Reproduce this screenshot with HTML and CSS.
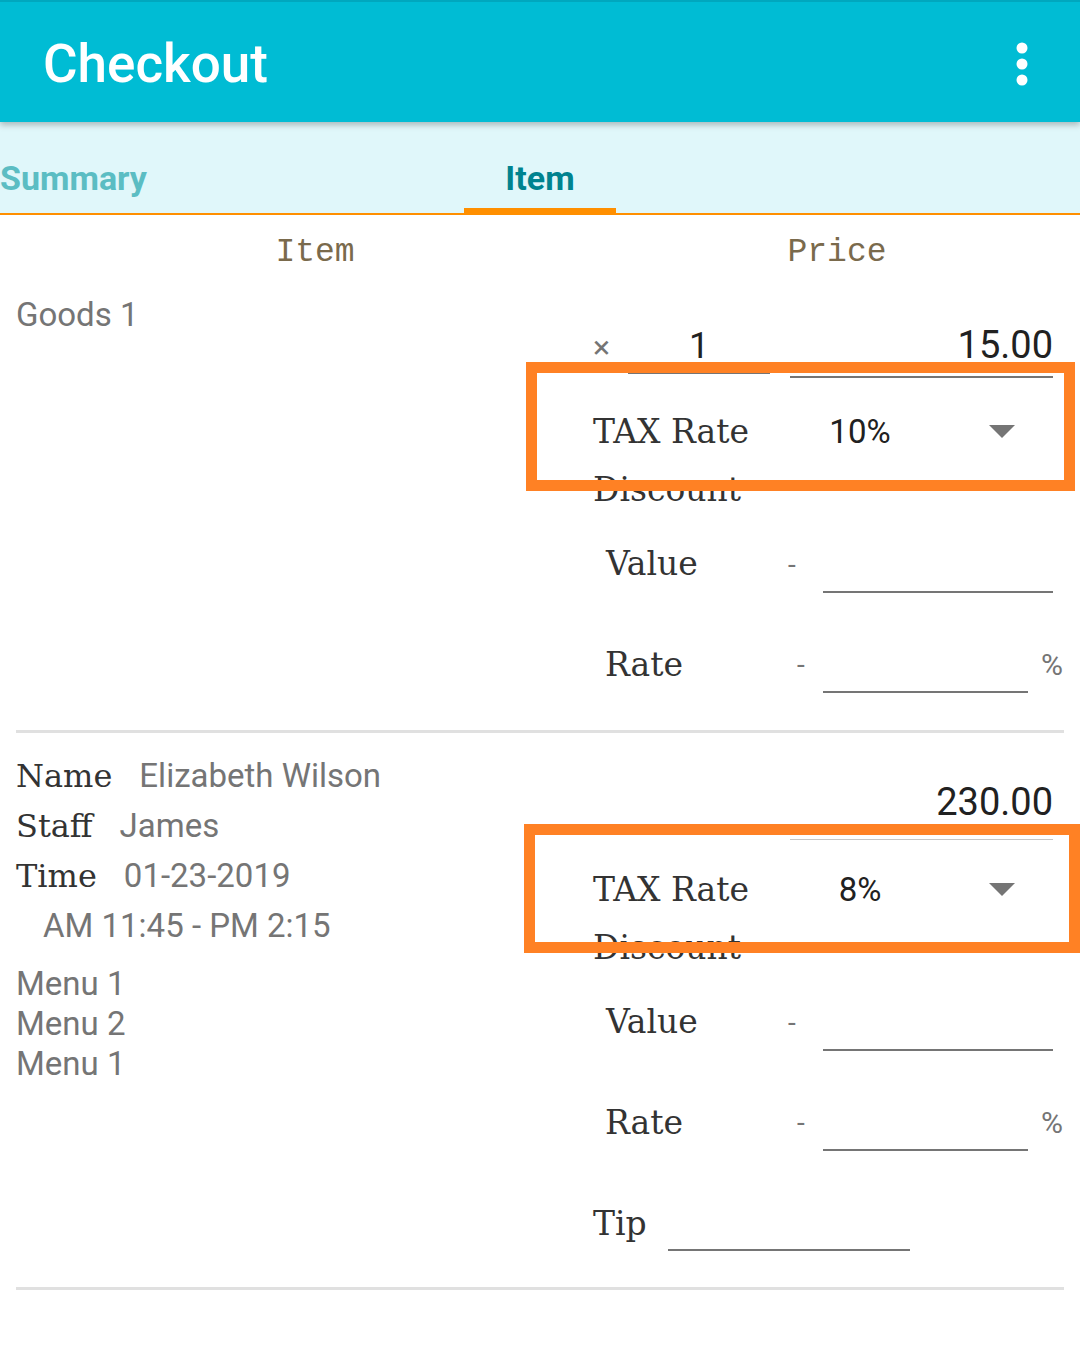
FILE: index.html
```html
<!DOCTYPE html>
<html lang="en">
<head>
    <meta charset="UTF-8">
    <meta name="viewport" content="width=device-width, initial-scale=1.0">
    <title>Checkout</title>
    <link rel="stylesheet" href="styles.css">
</head>
<body>

<header class="appbar">
    <h1 class="appbar-title">Checkout</h1>
    <svg class="overflow" width="12" height="44" viewBox="0 0 12 44">
        <circle cx="6" cy="6" r="5.5"/>
        <circle cx="6" cy="22" r="5.5"/>
        <circle cx="6" cy="38" r="5.5"/>
    </svg>
</header>

<nav class="tabs">
    <a class="tab">Summary</a>
    <a class="tab active">Item</a>
</nav>

<div class="col-head">
    <span>Item</span>
    <span>Price</span>
</div>

<!-- first line: a single product -->
<section class="order">
    <div class="order-info">
        <p class="goods">Goods 1</p>
    </div>
    <div class="order-form">
        <div class="price-row">
            <span class="times">&times;</span>
            <span class="field qty">1</span>
            <span class="field price">15.00</span>
        </div>
        <div class="tax-row">
            <span class="label">TAX Rate</span>
            <span class="tax-value">10%</span>
            <span class="caret"></span>
        </div>
        <div class="label discount">Discount</div>
        <div class="adj-row value-row">
            <span class="label">Value</span>
            <span class="dash">-</span>
            <span class="field value-field"></span>
        </div>
        <div class="adj-row rate-row">
            <span class="label">Rate</span>
            <span class="dash">-</span>
            <span class="field rate-field"></span>
            <span class="unit">%</span>
        </div>
    </div>
    <div class="highlight"></div>
</section>

<hr class="divider">

<!-- second line: a booking -->
<section class="order booking">
    <div class="order-info">
        <p class="info"><span class="label">Name</span><span class="info-value">Elizabeth Wilson</span></p>
        <p class="info"><span class="label">Staff</span><span class="info-value">James</span></p>
        <p class="info"><span class="label">Time</span><span class="info-value">01-23-2019</span></p>
        <p class="info time-range">AM 11:45 - PM 2:15</p>
        <ul class="menus">
            <li>Menu 1</li>
            <li>Menu 2</li>
            <li>Menu 1</li>
        </ul>
    </div>
    <div class="order-form">
        <div class="price-row">
            <span class="field price light">230.00</span>
        </div>
        <div class="tax-row">
            <span class="label">TAX Rate</span>
            <span class="tax-value">8%</span>
            <span class="caret"></span>
        </div>
        <div class="label discount">Discount</div>
        <div class="adj-row value-row">
            <span class="label">Value</span>
            <span class="dash">-</span>
            <span class="field value-field"></span>
        </div>
        <div class="adj-row rate-row">
            <span class="label">Rate</span>
            <span class="dash">-</span>
            <span class="field rate-field"></span>
            <span class="unit">%</span>
        </div>
        <div class="adj-row tip-row">
            <span class="label">Tip</span>
            <span class="field tip-field"></span>
        </div>
    </div>
    <div class="highlight"></div>
</section>

<hr class="divider">

</body>
</html>
```

FILE: styles.css
```css
body {
    margin: 0;
    font-family: Roboto, "Noto Sans", sans-serif;
    background-color: #FFFFFF;
    color: #212121;
}

p, ul {
    margin: 0;
    padding: 0;
}

/* App bar */
.appbar {
    display: flex;
    align-items: center;
    justify-content: space-between;
    height: 122px;
    box-sizing: border-box;
    padding: 4px 52px 0 43px;
    background-color: #00BCD4; /* cyan 500 */
    border-top: 2px solid #00A7BE;
    box-shadow: 0 3px 6px rgba(0, 0, 0, 0.25);
    position: relative;
    z-index: 1;
}

.appbar-title {
    margin: 0;
    font-size: 53px;
    font-weight: 500;
    line-height: 1;
    color: #FFFFFF;
}

.overflow {
    fill: #FFFFFF;
}

/* Tabs */
.tabs {
    display: flex;
    height: 93px;
    box-sizing: border-box;
    background-color: #E0F7FA; /* cyan 50 */
    border-bottom: 2px solid #FF8F00;
}

.tab {
    box-sizing: border-box;
    padding-top: 40px;
    font-size: 34px;
    font-weight: 700;
    line-height: 33px;
    color: #5BBDC3;
}

.tab:first-child {
    flex: 0 0 464px;
}

.tab.active {
    flex: 0 0 152px;
    text-align: center;
    color: #00838F; /* cyan 800 */
    border-bottom: 5px solid #FF8F00;
}

/* Column headers */
.col-head {
    display: grid;
    grid-template-columns: 630px 414px;
    align-items: center;
    height: 75px;
    font-family: "Liberation Mono", monospace;
    font-size: 33px;
    color: #7A6A4C;
    text-align: center;
}

/* Order lines */
.order {
    display: grid;
    grid-template-columns: 560px minmax(0, 1fr);
    position: relative;
    padding-bottom: 37px;
}

.order.booking {
    padding-bottom: 36px;
}

.order-info {
    padding-left: 16px;
    font-size: 33px;
    color: #757575; /* grey 600 */
}

.goods {
    padding-top: 5px;
    line-height: 40px;
}

.label {
    font-family: "DejaVu Serif", serif;
    font-size: 33px;
    color: #333333;
}

.info {
    line-height: 50px;
}

.booking .order-info {
    padding-top: 18px;
}

.info .label {
    margin-right: 27px;
    font-size: 32px;
}

.time-range {
    padding-left: 27px;
}

.menus {
    list-style: none;
    margin-top: 13px;
    line-height: 40px;
}

.order-form {
    display: flex;
    flex-direction: column;
    padding: 0 27px 0 33px;
}

.field {
    display: block;
    box-sizing: border-box;
    border-bottom: 2px solid #757575;
}

.price-row {
    display: flex;
    align-items: flex-end;
    height: 92px;
}

.booking .price-row {
    height: 107px;
}

.times {
    width: 35px;
    margin-bottom: 17px;
    font-size: 32px;
    line-height: 36px;
    color: #757575;
}

.qty {
    width: 142px;
    margin-bottom: 8px;
    padding-bottom: 8px;
    font-size: 36px;
    line-height: 36px;
    text-align: center;
}

.price {
    width: 263px;
    margin-left: auto;
    margin-bottom: 4px;
    padding-bottom: 12px;
    font-size: 38px;
    line-height: 38px;
    text-align: right;
}

.price.light {
    margin-bottom: 0;
    padding-bottom: 18px;
    border-bottom: 1px solid #C6C6C6;
}

.tax-row {
    display: flex;
    align-items: center;
    height: 82px;
    margin-top: 8px;
}

.tax-row .label {
    width: 197px;
}

.tax-value {
    width: 140px;
    font-size: 33px;
    text-align: center;
}

.caret {
    margin: 0 38px 0 auto;
    width: 0;
    height: 0;
    border-left: 13.5px solid transparent;
    border-right: 13.5px solid transparent;
    border-top: 13px solid #757575;
}

.discount {
    line-height: 36px;
}

.adj-row {
    display: flex;
    align-items: flex-end;
    height: 100px;
}

.adj-row .label,
.adj-row .dash,
.adj-row .unit {
    line-height: 36px;
    margin-bottom: 10px;
}

.value-row {
    height: 85px;
}

.value-row .label {
    margin-bottom: 11px;
}

.adj-row .label {
    width: 195px;
    flex-shrink: 0;
    box-sizing: border-box;
    padding-left: 12px;
}

.value-row .label {
    padding-left: 13px;
}

.dash {
    width: 35px;
    flex-shrink: 0;
    font-size: 28px;
    color: #757575;
}

.rate-row .dash {
    padding-left: 9px;
    box-sizing: border-box;
}

.value-field {
    width: 230px;
    height: 40px;
    flex-shrink: 0;
}

.rate-field {
    width: 205px;
    height: 40px;
    flex-shrink: 0;
}

.unit {
    margin-left: 13px;
    font-size: 30px;
    color: #757575;
}

.tip-row .label {
    width: 75px;
    padding-left: 0;
    margin-bottom: 9px;
}

.tip-field {
    width: 242px;
    height: 40px;
    flex-shrink: 0;
}

/* Orange highlight frames drawn over the tax rows */
.highlight {
    position: absolute;
    top: 72px;
    left: 526px;
    width: 549px;
    height: 129px;
    box-sizing: border-box;
    border: 11px solid #FF8124;
}

.booking .highlight {
    top: 91px;
    left: 524px;
    width: 556px;
}

.divider {
    height: 3px;
    margin: 0 16px;
    border: none;
    background-color: #E0E0E0;
}
```
